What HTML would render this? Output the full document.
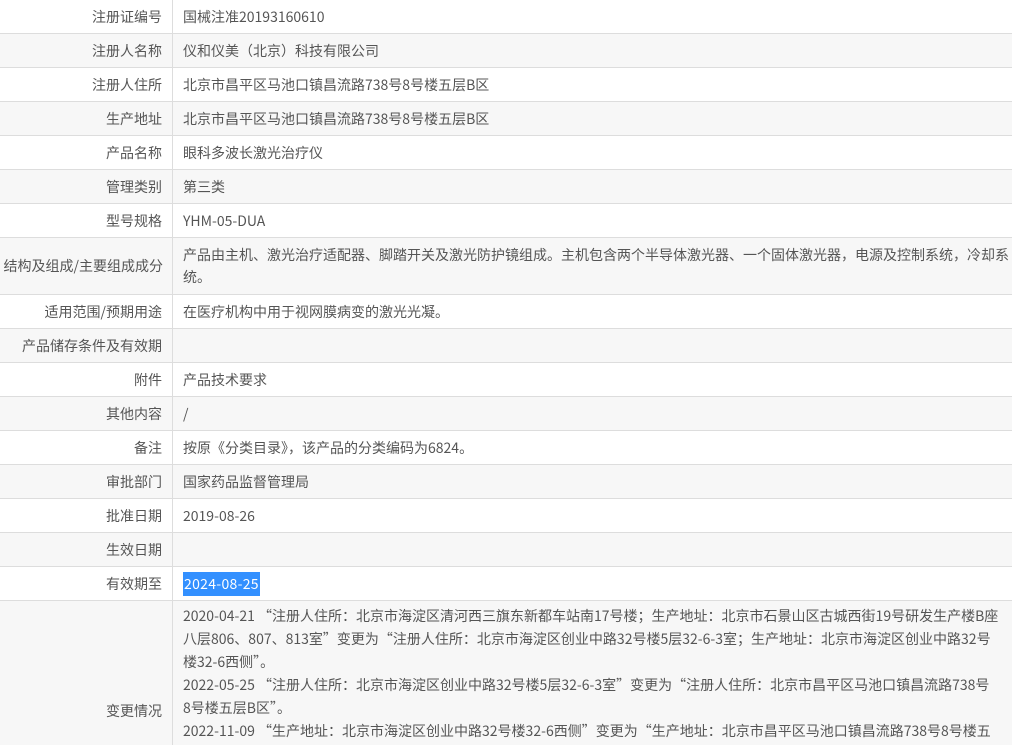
<!DOCTYPE html>
<html><head><meta charset="utf-8"><style>
html,body{margin:0;padding:0;background:#fff;width:1012px;height:745px;overflow:hidden}
table{border-collapse:collapse;width:1013px;font-family:"Noto Sans CJK SC","Liberation Sans",sans-serif;font-size:14px;color:#555;table-layout:fixed}
td{border:1px solid #ddd;padding:0 10px;height:33px;line-height:22px;white-space:nowrap;overflow:hidden;vertical-align:middle}
td.l{width:162px;text-align:right;padding-right:10px;padding-left:0;overflow:visible}
tr:nth-child(even) td{background:#f7f7f7}
tr:first-child td{border-top:none}
td:first-child{border-left:none}
.sel{background:#3390ff;color:#fff;padding:2px 1px;letter-spacing:0.3px}
</style></head><body>
<table>
<tr><td class="l">注册证编号</td><td>国械注准20193160610</td></tr>
<tr><td class="l">注册人名称</td><td>仪和仪美（北京）科技有限公司</td></tr>
<tr><td class="l">注册人住所</td><td>北京市昌平区马池口镇昌流路738号8号楼五层B区</td></tr>
<tr><td class="l">生产地址</td><td>北京市昌平区马池口镇昌流路738号8号楼五层B区</td></tr>
<tr><td class="l">产品名称</td><td>眼科多波长激光治疗仪</td></tr>
<tr><td class="l">管理类别</td><td>第三类</td></tr>
<tr><td class="l">型号规格</td><td>YHM-05-DUA</td></tr>
<tr><td class="l" style="height:56px;padding-right:9px">结构及组成/主要组成成分</td><td style="vertical-align:top;padding-top:6px">产品由主机、激光治疗适配器、脚踏开关及激光防护镜组成。主机包含两个半导体激光器、一个固体激光器，电源及控制系统，冷却系<br>统。</td></tr>
<tr><td class="l">适用范围/预期用途</td><td>在医疗机构中用于视网膜病变的激光光凝。</td></tr>
<tr><td class="l">产品储存条件及有效期</td><td></td></tr>
<tr><td class="l">附件</td><td>产品技术要求</td></tr>
<tr><td class="l">其他内容</td><td>/</td></tr>
<tr><td class="l">备注</td><td>按原《分类目录》，该产品的分类编码为6824。</td></tr>
<tr><td class="l">审批部门</td><td>国家药品监督管理局</td></tr>
<tr><td class="l">批准日期</td><td>2019-08-26</td></tr>
<tr><td class="l">生效日期</td><td></td></tr>
<tr><td class="l">有效期至</td><td><span class="sel">2024-08-25</span></td></tr>
<tr><td class="l" style="height:219px">变更情况</td><td style="vertical-align:top;padding-top:4px;line-height:23px">2020-04-21 “注册人住所：北京市海淀区清河西三旗东新都车站南17号楼；生产地址：北京市石景山区古城西街19号研发生产楼B座<br>八层806、807、813室”变更为“注册人住所：北京市海淀区创业中路32号楼5层32-6-3室；生产地址：北京市海淀区创业中路32号<br>楼32-6西侧”。<br>2022-05-25 “注册人住所：北京市海淀区创业中路32号楼5层32-6-3室”变更为“注册人住所：北京市昌平区马池口镇昌流路738号<br>8号楼五层B区”。<br>2022-11-09 “生产地址：北京市海淀区创业中路32号楼32-6西侧”变更为“生产地址：北京市昌平区马池口镇昌流路738号8号楼五<br>层B区”。<br>&nbsp;<br>&nbsp;</td></tr>
</table>
</body></html>
